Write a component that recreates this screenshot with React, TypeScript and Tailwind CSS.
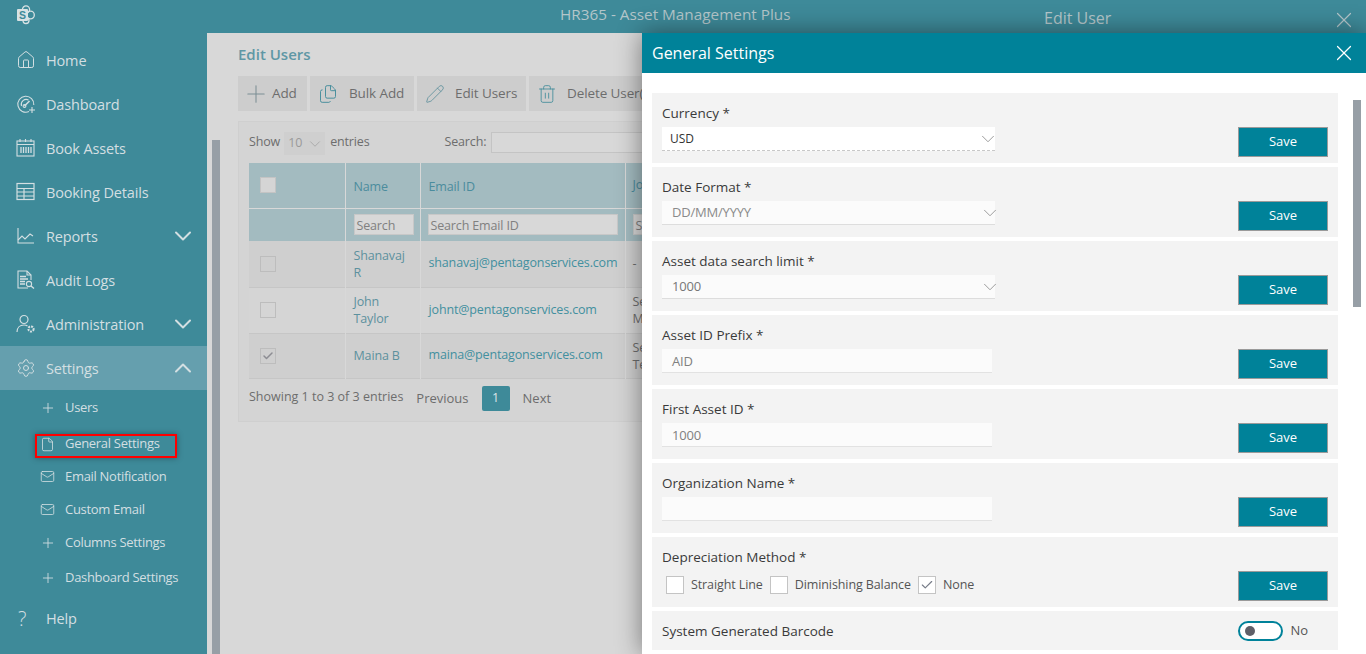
import React from "react";
import { Home, Settings, ChevronDown, ChevronUp, Plus, Mail, Pencil, Trash2, Files, X, Check, File } from "lucide-react";

const Logo = () => (
  <svg width="20" height="20" viewBox="0 0 20 20" fill="none" className="text-[#d8e2e4]">
    <circle cx="10" cy="4.5" r="3.6" stroke="currentColor" strokeWidth="1.3" />
    <circle cx="14.5" cy="10" r="3.8" stroke="currentColor" strokeWidth="1.3" />
    <circle cx="10" cy="15.5" r="3" stroke="currentColor" strokeWidth="1.3" />
    <rect x="1" y="4" width="11" height="12" rx="1" fill="currentColor" />
    <text x="6.500" y="13.500" textAnchor="middle" fontSize="10.500" fontWeight="700" fill="#3e8a99" fontFamily="Liberation Sans, sans-serif">S</text>
  </svg>
);

const GaugeIcon = () => (
  <svg width="20" height="20" viewBox="0 0 20 20" fill="none" stroke="currentColor" strokeWidth="1.1">
    <path d="M13 17.6A8 8 0 1 1 17.8 11" />
    <path d="M5.5 12a5 5 0 0 1 7-6" />
    <path d="M8.5 12 13.5 7" strokeWidth="1.6" />
    <circle cx="8.5" cy="12" r="1.4" />
    <path d="M16 13v6M13 16h6" />
  </svg>
);

const CalendarIcon = () => (
  <svg width="20" height="20" viewBox="0 0 20 20" fill="none" stroke="currentColor" strokeWidth="1.1">
    <rect x="1" y="3" width="17" height="15" />
    <path d="M1 6.5h17M4 1v3M9.5 1v3M15 1v3" />
    <path d="M5 9v6M7.5 9v6M10 9v6M12.5 9v6M15 9v6" strokeWidth="1.3" />
  </svg>
);

const TableIcon = () => (
  <svg width="20" height="20" viewBox="0 0 20 20" fill="none" stroke="currentColor" strokeWidth="1.2">
    <rect x="1" y="1.5" width="17" height="16" />
    <path d="M1 6.5h17M1 10h17M1 14h17M8 6.5v11" />
  </svg>
);

const ChartIcon = () => (
  <svg width="20" height="20" viewBox="0 0 20 20" fill="none" stroke="currentColor" strokeWidth="1.1">
    <path d="M2 2v15h16" />
    <path d="M2 14l4-4 3 3 5-5 3 2" />
  </svg>
);

const AuditIcon = () => (
  <svg width="20" height="20" viewBox="0 0 20 20" fill="none" stroke="currentColor" strokeWidth="1.1">
    <path d="M12 18H2V1h9l4 4v5" />
    <path d="M11 1v4h4" />
    <path d="M4 6.500h6M4 9h8M4 11.500h5M4 14h5" strokeWidth="1.4" />
    <circle cx="13" cy="14" r="2.600" />
    <path d="M15 16l3 2.500" strokeWidth="1.4" />
  </svg>
);

const AdminIcon = () => (
  <svg width="20" height="20" viewBox="0 0 20 20" fill="none" stroke="currentColor" strokeWidth="1.2">
    <circle cx="8" cy="5.500" r="4" />
    <path d="M1 18c0-4.500 3-7 7-7 1.500 0 2.500.3 3.500 1" />
    <circle cx="15" cy="15" r="2.600" strokeWidth="2" strokeDasharray="2 1" />
  </svg>
);

const topItems = [
  { label: "Home", icon: <Home size={20} strokeWidth={1.2} /> },
  { label: "Dashboard", icon: <GaugeIcon /> },
  { label: "Book Assets", icon: <CalendarIcon /> },
  { label: "Booking Details", icon: <TableIcon /> },
  { label: "Reports", icon: <ChartIcon />, chevron: "down" },
  { label: "Audit Logs", icon: <AuditIcon /> },
  { label: "Administration", icon: <AdminIcon />, chevron: "down" },
  { label: "Settings", icon: <Settings size={20} strokeWidth={1.2} />, chevron: "up", active: true },
];

const subItems = [
  { label: "Users", icon: <Plus size={16} strokeWidth={1.3} />, h: "h-[36px]" },
  { label: "General Settings", icon: <File size={15} strokeWidth={1.3} />, h: "h-[34px] pt-[2px]" },
  { label: "Email Notification", icon: <Mail size={15} strokeWidth={1.3} />, h: "h-[33px]" },
  { label: "Custom Email", icon: <Mail size={15} strokeWidth={1.3} />, h: "h-[33px]" },
  { label: "Columns Settings", icon: <Plus size={16} strokeWidth={1.3} />, h: "h-[33px]" },
  { label: "Dashboard Settings", icon: <Plus size={16} strokeWidth={1.3} />, h: "h-[36px] pt-[2px]" },
];

const Sidebar = () => (
  <aside className="w-[207px] shrink-0 bg-[#3e8a99] pt-[5px] text-[#d3dfe2]">
    {topItems.map((item) => (
      <div
        key={item.label}
        className={`flex h-[44px] items-center pl-[16px] pr-[10px] ${item.active ? "bg-[#659fae]" : ""}`}
      >
        <span className="flex w-[30px] shrink-0 items-center">{item.icon}</span>
        <span className="flex-1 pt-[2px] text-[14.5px] tracking-[-0.15px]">{item.label}</span>
        {item.chevron === "down" && <ChevronDown size={28} strokeWidth={1.7} />}
        {item.chevron === "up" && <ChevronUp size={28} strokeWidth={1.7} />}
      </div>
    ))}
    <div>
      {subItems.map((sub) => (
        <div key={sub.label} className={`flex items-center pl-[40px] text-[13px] tracking-[-0.3px] ${sub.h}`}>
          <span className="flex w-[25px] shrink-0 items-center">{sub.icon}</span>
          <span>{sub.label}</span>
        </div>
      ))}
    </div>
    <div className="mt-[2px] flex h-[44px] items-center pl-[18px] text-[14.5px] tracking-[-0.15px]">
      <span className="w-[28px] text-[20px] font-light leading-none">?</span>
      <span>Help</span>
    </div>
  </aside>
);

const Toolbar = () => (
  <div className="mt-[11px] flex gap-[3px] text-[13.5px] tracking-[-0.1px] text-[#6d6d6d]">
    <div className="flex h-[35px] w-[69px] items-center gap-[2px] bg-[#cdcdcd] pl-[4px]">
      <Plus size={28} strokeWidth={0.9} className="text-[#7d8f95]" />
      <span>Add</span>
    </div>
    <div className="flex h-[35px] w-[104px] items-center gap-[11px] bg-[#cdcdcd] pl-[8px]">
      <Files size={20} strokeWidth={1.1} className="text-[#3f8a99]" />
      <span>Bulk Add</span>
    </div>
    <div className="flex h-[35px] w-[109px] items-center gap-[10px] bg-[#cdcdcd] pl-[8px]">
      <Pencil size={20} strokeWidth={1} className="text-[#5d8f9b]" />
      <span>Edit Users</span>
    </div>
    <div className="flex h-[35px] w-[140px] shrink-0 items-center gap-[10px] bg-[#cdcdcd] pl-[8px]">
      <Trash2 size={20} strokeWidth={1} className="text-[#3f8a99]" />
      <span className="whitespace-nowrap">Delete User(s)</span>
    </div>
  </div>
);

// only the first letters of the job column show left of the settings panel
const rows = [
  { name: "Shanavaj R", email: "shanavaj@pentagonservices.com", job: ["-"], checked: false, bg: "bg-[#cfcfcf]", h: "h-[46px]" },
  { name: "John Taylor", email: "johnt@pentagonservices.com", job: ["Se", "Ma"], checked: false, bg: "bg-[#d5d5d5]", h: "h-[46px]" },
  { name: "Maina B", email: "maina@pentagonservices.com", job: ["Se", "Te"], checked: true, bg: "bg-[#cfcfcf]", h: "h-[45px]" },
];

const UsersTable = () => (
  <table className="w-[393px] table-fixed border-collapse text-[12.5px] tracking-[-0.15px]">
    <colgroup>
      <col className="w-[96px]" />
      <col className="w-[75px]" />
      <col className="w-[205px]" />
      <col className="w-[17px]" />
    </colgroup>
    <thead className="bg-[#a3bbc0] text-[#4b8c9d]">
      <tr className="h-[45px]">
        <th className="border-r border-b border-[#d8d8d8] pl-[11px] text-left font-normal">
          <span className="block h-[16px] w-[16px] border border-[#c4c4c4] bg-[#d5d5d5]" />
        </th>
        <th className="border-r border-b border-[#d8d8d8] pl-[8px] pt-[5px] text-left font-normal">Name</th>
        <th className="border-r border-b border-[#d8d8d8] pl-[8px] pt-[5px] text-left font-normal">Email ID</th>
        <th className="whitespace-nowrap border-b border-[#d8d8d8] pl-[7px] text-left font-normal">Jo</th>
      </tr>
      <tr className="h-[33px]">
        <th className="border-r border-[#d8d8d8]" />
        <th className="border-r border-[#d8d8d8] pl-[8px] text-left font-normal">
          <div className="flex h-[21px] w-[60px] items-center border border-[#c8c8c8] bg-[#d8d8d8] pl-[2px] pt-[4px] text-[#808080]">Search</div>
        </th>
        <th className="border-r border-[#d8d8d8] pl-[7px] text-left font-normal">
          <div className="flex h-[21px] w-[190px] items-center border border-[#c8c8c8] bg-[#d8d8d8] pl-[2px] pt-[4px] text-[#808080]">Search Email ID</div>
        </th>
        <th className="pl-[7px] text-left font-normal">
          <div className="flex h-[21px] w-[30px] items-center border border-[#c8c8c8] bg-[#d8d8d8] pl-[2px] pt-[4px] text-[#808080]">S</div>
        </th>
      </tr>
    </thead>
    <tbody>
      {rows.map((row) => (
        <tr key={row.name} className={`${row.h} ${row.bg} border-b border-[#c6c6c6]`}>
          <td className="border-r border-[#d8d8d8] pl-[11px]">
            <span className="flex h-[16px] w-[16px] items-center justify-center border border-[#bdbdbd]">
              {row.checked && <Check size={12} strokeWidth={3} className="text-[#8d8d93]" />}
            </span>
          </td>
          <td className="border-r border-[#d8d8d8] pl-[8px] pr-[10px] leading-[17px] text-[#5d919e]">{row.name}</td>
          <td className="border-r border-[#d8d8d8] pl-[8px] text-[#43909f]">{row.email}</td>
          <td className="pl-[7px] leading-[17px] text-[#6d6d6d]">
            {row.job.map((line) => (
              <div key={line} className="whitespace-nowrap">
                {line}
              </div>
            ))}
          </td>
        </tr>
      ))}
    </tbody>
  </table>
);

const EditUsers = () => (
  <main className="relative flex-1 overflow-hidden bg-[#d8d8d8] pl-[31px] pt-[11px]">
    <span className="absolute left-[5px] top-[107px] h-[514px] w-[8px] bg-[#979fa6]" />
    <h1 className="text-[15px] font-semibold leading-[21px] text-[#5f97a5]">Edit Users</h1>
    <Toolbar />
    <section className="mt-[10px] h-[301px] w-[700px] border border-[#cfcfcf] bg-[#d4d4d4] pl-[10px] pt-[10px]">
      <div className="flex h-[31px] items-start text-[12.5px] tracking-[-0.15px] text-[#6d6d6d]">
        <span className="pt-[1px]">Show</span>
        <div className="ml-[4px] flex h-[23px] w-[41px] items-center justify-between bg-[#cfcfcf] pl-[4px] pr-[1px] text-[#9a9a9a]">
          10
          <ChevronDown size={18} strokeWidth={0.9} />
        </div>
        <span className="ml-[5px] pt-[1px]">entries</span>
        <span className="ml-[75px] pt-[1px]">Search:</span>
        <div className="ml-[5px] h-[21px] w-[300px] border border-[#c4c4c4] bg-[#d8d8d8]" />
      </div>
      <UsersTable />
      <div className="mt-[7px] flex h-[25px] items-start text-[12.5px] text-[#6d6d6d]">
        <span className="pt-[2px]">Showing 1 to 3 of 3 entries</span>
        <span className="ml-[13px] pt-[3px] text-[13px]">Previous</span>
        <span className="ml-[13px] flex h-[25px] w-[28px] items-center justify-center rounded-[2px] bg-[#3e8a99] text-[#dce6e8]">1</span>
        <span className="ml-[13px] pt-[3px] text-[13px]">Next</span>
      </div>
    </section>
  </main>
);

const SaveButton = () => (
  <button className="mr-[10px] mt-[23px] h-[30px] w-[90px] shrink-0 border border-[#9a9a9a] bg-[#008299] text-[13px] text-white">
    Save
  </button>
);

const Label = ({ children }: { children: React.ReactNode }) => (
  <div className="text-[13.5px] font-medium leading-[18px] text-[#3a3a3a]">{children}</div>
);

const selects = [
  { label: "Currency *", value: "USD", color: "text-[#333333]", bg: "bg-white", box: "border-[#c8c8c8] border-dashed pl-[8px] text-[12px]", chev: "-mr-[4px]" },
  { label: "Date Format *", value: "DD/MM/YYYY", color: "text-[#8a8a8a]", bg: "bg-[#fbfbfb]", box: "border-[#dddddd] pl-[10px] text-[13px] tracking-[-0.2px]", chev: "-mr-[6px]" },
  { label: "Asset data search limit *", value: "1000", color: "text-[#777777]", bg: "bg-[#fbfbfb]", box: "border-[#dddddd] pl-[10px] text-[13px] tracking-[-0.2px]", chev: "-mr-[6px]" },
];

const inputs = [
  { label: "Asset ID Prefix *", value: "AID" },
  { label: "First Asset ID *", value: "1000" },
  { label: "Organization Name *", value: "" },
];

const methods = [
  { label: "Straight Line", checked: false },
  { label: "Diminishing Balance", checked: false },
  { label: "None", checked: true },
];

const GeneralSettings = () => (
  <div className="absolute right-0 top-[33px] h-[621px] w-[724px] overflow-hidden bg-white shadow-[0_0_24px_rgba(0,0,0,0.45)]">
    <div className="flex h-[40px] items-center justify-between bg-[#008299] pl-[10px] pr-[9px] text-white">
      <span className="text-[16px]">General Settings</span>
      <X size={26} strokeWidth={1.1} />
    </div>
    <span className="absolute right-[5px] top-[67px] h-[207px] w-[8px] bg-[#979fa6]" />
    <div className="ml-[10px] mt-[20px] flex w-[686px] flex-col gap-[4px]">
      {selects.map((s) => (
        <div key={s.label} className="flex h-[70px] justify-between bg-[#f3f3f3] pl-[10px] pt-[11px]">
          <div>
            <Label>{s.label}</Label>
            <div className={`mt-[5px] flex h-[24px] w-[333px] items-center justify-between border-b ${s.box} ${s.bg} ${s.color}`}>
              {s.value}
              <ChevronDown size={22} strokeWidth={0.9} className={`${s.chev} text-[#888888]`} />
            </div>
          </div>
          <SaveButton />
        </div>
      ))}
      {inputs.map((s) => (
        <div key={s.label} className="flex h-[70px] justify-between bg-[#f3f3f3] pl-[10px] pt-[11px]">
          <div>
            <Label>{s.label}</Label>
            <div className="mt-[5px] flex h-[24px] w-[330px] items-center border-b border-[#e2e2e2] bg-[#fbfbfb] pl-[10px] pt-[2px] text-[13px] tracking-[-0.2px] text-[#808080]">
              {s.value}
            </div>
          </div>
          <SaveButton />
        </div>
      ))}
      <div className="flex h-[70px] justify-between bg-[#f3f3f3] pl-[10px] pt-[11px]">
        <div>
          <Label>Depreciation Method *</Label>
          <div className="mt-[10px] flex items-center pl-[4px] text-[12.5px] tracking-[-0.1px] text-[#555555]">
            {methods.map((m) => (
              <div key={m.label} className="mr-[7px] flex items-center gap-[7px]">
                <span className="flex h-[18px] w-[18px] items-center justify-center border border-[#c4c4c4] bg-white">
                  {m.checked && <Check size={14} strokeWidth={2} className="text-[#777c88]" />}
                </span>
                <span>{m.label}</span>
              </div>
            ))}
          </div>
        </div>
        <SaveButton />
      </div>
      <div className="flex h-[39px] items-center justify-between bg-[#f3f3f3] pl-[10px]">
        <Label>System Generated Barcode</Label>
        <div className="mr-[30px] flex items-center gap-[7px] text-[13px] text-[#555555]">
          <span className="flex h-[20px] w-[45px] items-center rounded-full border-2 border-[#00829a] bg-white pl-[5px]">
            <span className="h-[10px] w-[10px] rounded-full bg-[#5f5f68]" />
          </span>
          No
        </div>
      </div>
    </div>
  </div>
);

export default function App() {
  return (
    <div className="relative h-[654px] w-[1366px] overflow-hidden font-['Open_Sans',sans-serif]">
      <header className="relative flex h-[33px] items-center bg-[#3e8a99] text-[#b4c6ca]">
        <span className="mb-[4px] ml-[16px]">
          <Logo />
        </span>
        <span className="absolute left-[560px] top-[4px] text-[15.3px] leading-[20px]">HR365 - Asset Management Plus</span>
        <span className="absolute left-[1044px] top-[7px] text-[16px] leading-[22px]">Edit User</span>
        <X size={26} strokeWidth={1.1} className="absolute left-[1331px] top-[7px]" />
      </header>
      <div className="flex h-[621px]">
        <Sidebar />
        <EditUsers />
      </div>
      <GeneralSettings />
      {/* red marker around the General Settings sub item */}
      <span className="absolute left-[35px] top-[434px] h-[24px] w-[142px] border-2 border-[#ff0000] shadow-[0_0_6px_rgba(0,0,0,0.35)]" />
    </div>
  );
}
